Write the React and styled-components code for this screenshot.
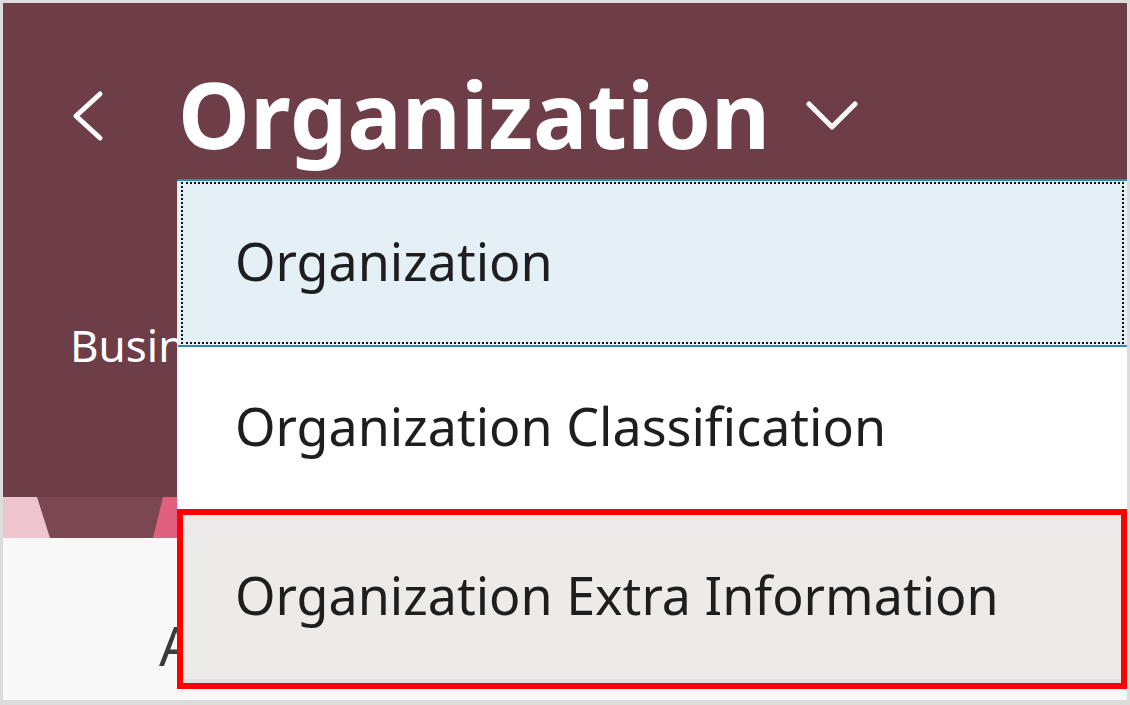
import React from 'react';
import styled, { createGlobalStyle } from 'styled-components';

const GlobalStyle = createGlobalStyle`
  html, body {
    margin: 0;
    padding: 0;
    background: #ffffff;
  }
  body {
    font-family: "Noto Sans", "Open Sans", sans-serif;
  }
`;

const Frame = styled.div`
  position: relative;
  width: 1130px;
  height: 705px;
  box-sizing: border-box;
  border: 3px solid #dcdcdc;
  border-bottom-width: 5px;
  display: flex;
  flex-direction: column;
  overflow: hidden;
  background: #f9f8f8;
`;

const Header = styled.header`
  height: 494px;
  background: #6d3d48;
  display: flex;
  flex-direction: column;
  padding: 66px 0 0 67px;
  box-sizing: border-box;
`;

const TitleRow = styled.div`
  display: flex;
  align-items: center;
`;

const IconButton = styled.span`
  display: flex;
  align-items: center;
  margin-top: ${(p) => p.$offset || 0}px;
  margin-left: ${(p) => p.$left || 0}px;
`;

const Title = styled.h1`
  margin: 0 0 0 74px;
  font-family: "Noto Sans", sans-serif;
  font-weight: 700;
  font-size: 91px;
  line-height: 1;
  color: #ffffff;
`;

const Subtitle = styled.div`
  margin-top: 163px;
  font-size: 44px;
  color: #ffffff;
  line-height: 1;
  white-space: nowrap;
`;

const Strip = styled.div`
  height: 41px;
  background: #7b4753;
  display: flex;
`;

const Content = styled.div`
  flex: 1;
  background: #f9f8f8;
  padding: 80px 0 0 156px;
`;

const SectionTitle = styled.div`
  font-size: 54px;
  color: #3a3a3a;
  line-height: 1;
`;

const Menu = styled.ul`
  position: absolute;
  left: 175px;
  top: 176px;
  right: 0;
  margin: 0;
  padding: 0;
  list-style: none;
  background: #ffffff;
  border-top-left-radius: 4px;
  box-shadow: -1px 0 0 #efe6e8;
`;

const Item = styled.li`
  box-sizing: border-box;
  height: ${(p) => p.$h}px;
  display: flex;
  align-items: center;
  padding: 0 0 ${(p) => p.$lift}px 57px;
  font-size: 52px;
  color: #1e1e1e;
  background: ${(p) => (p.$focused ? '#e4f0f6' : p.$marked ? '#ecebea' : '#ffffff')};
  border-top: ${(p) => (p.$focused ? '2px solid #2d8cad' : 'none')};
  border-bottom: ${(p) => (p.$focused ? '2px solid #2d8cad' : 'none')};
  outline: ${(p) => (p.$focused ? '2px dotted #111111' : 'none')};
  outline-offset: -5px;
  white-space: nowrap;

  ${(p) =>
    p.$marked &&
    `
    margin-left: -1px;
    padding-left: 52px;
    border: 6px solid #ff0000;
    box-shadow: inset 0 -4px 0 #e2e1e0;
  `}
`;

const Back = () => (
  <svg width="34" height="52" viewBox="0 0 34 52" fill="none">
    <polyline points="30,4 6,26 30,48" stroke="#ffffff" strokeWidth="5" strokeLinecap="round" strokeLinejoin="round" />
  </svg>
);

const Down = () => (
  <svg width="52" height="32" viewBox="0 0 52 32" fill="none">
    <polyline points="3,4 26,27 49,4" stroke="#ffffff" strokeWidth="5" strokeLinecap="round" strokeLinejoin="round" />
  </svg>
);

const Illustration = () => (
  <svg width="175" height="41" viewBox="0 0 175 41">
    <rect x="0" y="0" width="175" height="41" fill="#7b4753" />
    <polygon points="0,0 34,0 47,41 0,41" fill="#eec4ce" />
    <polygon points="160,0 175,0 175,41 150,41" fill="#e0607f" />
  </svg>
);

const items = [
  { label: 'Organization', h: 168, lift: 6, focused: true },
  { label: 'Organization Classification', h: 162, lift: 6 },
  { label: 'Organization Extra Information', h: 180, lift: 10, marked: true },
];

export default function App() {
  return (
    <>
      <GlobalStyle />
      <Frame>
        <Header>
          <TitleRow>
            <IconButton $offset={2}>
              <Back />
            </IconButton>
            <Title>Organization</Title>
            <IconButton $offset={2} $left={36}>
              <Down />
            </IconButton>
          </TitleRow>
          <Subtitle>Business Unit</Subtitle>
        </Header>
        <Strip>
          <Illustration />
        </Strip>
        <Content>
          <SectionTitle>About</SectionTitle>
        </Content>
        <Menu>
          {items.map((it) => (
            <Item key={it.label} $h={it.h} $lift={it.lift} $focused={it.focused} $marked={it.marked}>
              {it.label}
            </Item>
          ))}
        </Menu>
      </Frame>
    </>
  );
}
